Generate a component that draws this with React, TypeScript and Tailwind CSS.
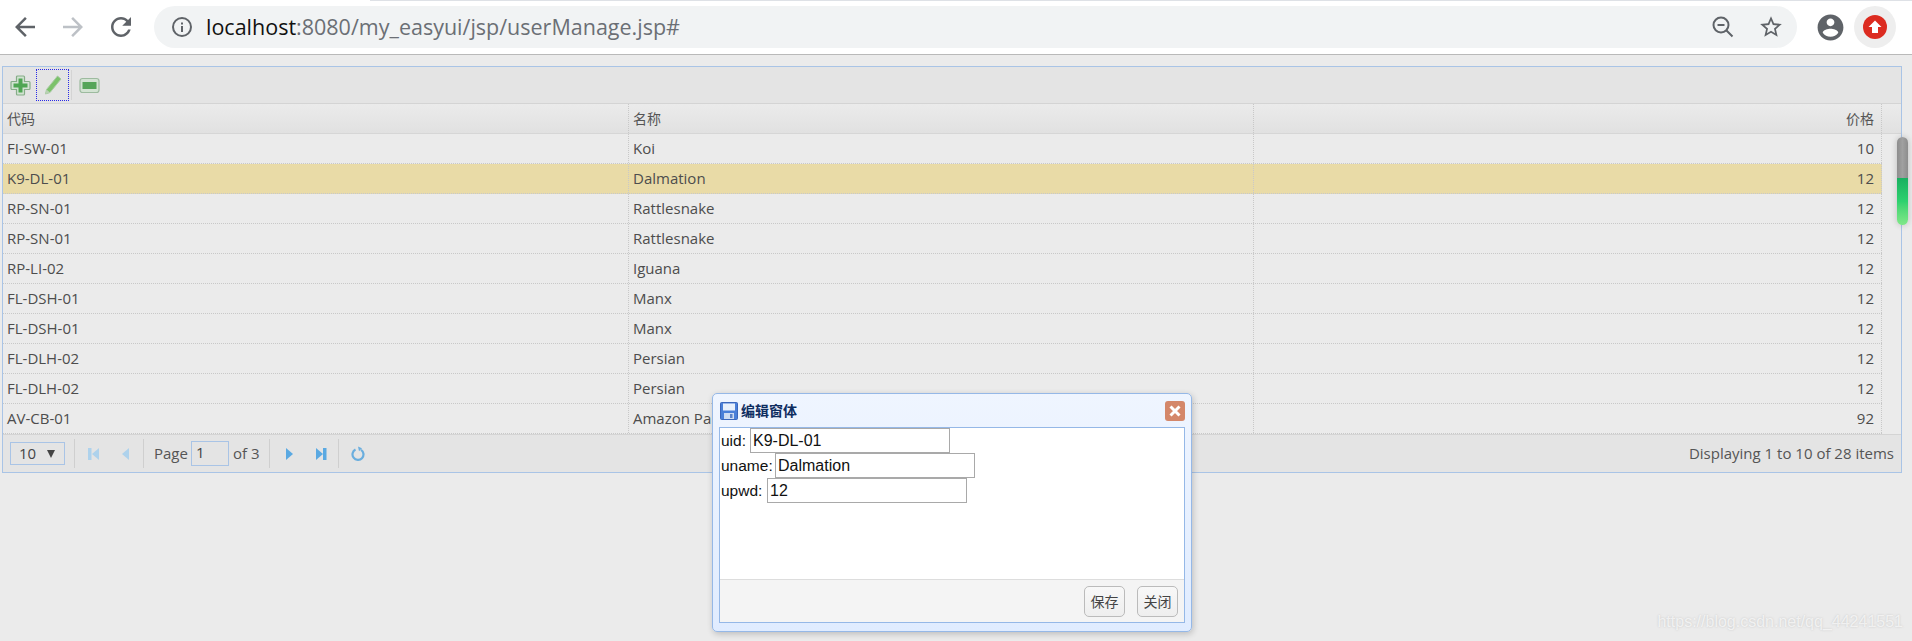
import React from 'react';

const rows = [
  ['FI-SW-01', 'Koi', '10'],
  ['K9-DL-01', 'Dalmation', '12'],
  ['RP-SN-01', 'Rattlesnake', '12'],
  ['RP-SN-01', 'Rattlesnake', '12'],
  ['RP-LI-02', 'Iguana', '12'],
  ['FL-DSH-01', 'Manx', '12'],
  ['FL-DSH-01', 'Manx', '12'],
  ['FL-DLH-02', 'Persian', '12'],
  ['FL-DLH-02', 'Persian', '12'],
  ['AV-CB-01', 'Amazon Parrot', '92'],
];

const BrowserBar = () => (
  <div className="relative flex h-[55px] items-center border-b border-[#b9b9b9] bg-white">
    {/* thin tab strip edge */}
    <div className="absolute left-[370px] right-0 top-0 h-px bg-[#dee1e6]" />
    <svg width="30" height="30" viewBox="0 0 24 24" className="ml-[10px]" fill="#5f6368">
      <path d="M20 11H7.83l5.59-5.59L12 4l-8 8 8 8 1.41-1.41L7.83 13H20v-2z" />
    </svg>
    <svg width="30" height="30" viewBox="0 0 24 24" className="ml-[18px]" fill="#bdc1c6">
      <path d="M12 4l-1.41 1.41L16.17 11H4v2h12.17l-5.58 5.59L12 20l8-8z" />
    </svg>
    <svg width="30" height="30" viewBox="0 0 24 24" className="ml-[18px]" fill="#5f6368">
      <path d="M17.65 6.35C16.2 4.9 14.21 4 12 4c-4.42 0-7.99 3.58-7.99 8s3.57 8 7.99 8c3.73 0 6.84-2.55 7.73-6h-2.08c-.82 2.33-3.04 4-5.65 4-3.31 0-6-2.69-6-6s2.69-6 6-6c1.66 0 3.14.69 4.22 1.78L13 11h7V4l-2.35 2.35z" />
    </svg>
    <div className="ml-[18px] flex h-[42px] w-[1643px] items-center rounded-full bg-[#f1f3f4] pl-[17px]">
      <svg width="22" height="22" viewBox="0 0 22 22" fill="none" stroke="#5f6368">
        <circle cx="11" cy="11" r="9" strokeWidth="2" />
        <rect x="10" y="10" width="2" height="6" fill="#5f6368" stroke="none" />
        <rect x="10" y="6.5" width="2" height="2" fill="#5f6368" stroke="none" />
      </svg>
      <div className="ml-[13px] font-['Open_Sans',sans-serif] text-[21.5px] text-[#6b6f75]">
        <span className="text-[#111]">localhost</span>:8080/my_easyui/jsp/userManage.jsp#
      </div>
      <svg width="24" height="24" viewBox="0 0 24 24" className="ml-auto" fill="none" stroke="#5f6368" strokeWidth="2">
        <circle cx="10" cy="10" r="7.5" />
        <path d="M6.5 10h7M15.5 15.5l6 6" />
      </svg>
      <svg width="26" height="26" viewBox="0 0 24 24" className="ml-[23px] mr-[13px]" fill="#5f6368">
        <path d="M22 9.24l-7.19-.62L12 2 9.19 8.63 2 9.24l5.46 4.73L5.82 21 12 17.27 18.18 21l-1.63-7.03L22 9.24zM12 15.4l-3.76 2.27 1-4.28-3.32-2.88 4.38-.38L12 6.1l1.71 4.04 4.38.38-3.32 2.88 1 4.28L12 15.4z" />
      </svg>
    </div>
    <svg width="31" height="31" viewBox="0 0 24 24" className="ml-[18px]" fill="#5f6368">
      <path d="M12 2C6.48 2 2 6.48 2 12s4.48 10 10 10 10-4.48 10-10S17.52 2 12 2zm0 3c1.66 0 3 1.34 3 3s-1.34 3-3 3-3-1.34-3-3 1.34-3 3-3zm0 14.2c-2.5 0-4.71-1.28-6-3.22.03-1.99 4-3.08 6-3.08 1.99 0 5.97 1.09 6 3.08-1.29 1.94-3.5 3.22-6 3.22z" />
    </svg>
    <div className="ml-[8px] flex h-[42px] w-[42px] items-center justify-center rounded-full bg-[#eeeeee]">
      <svg width="24" height="24" viewBox="0 0 24 24">
        <circle cx="12" cy="12" r="12" fill="#dc2b20" />
        <path d="M12 5.5l6.5 6.5H15v6H9v-6H5.5z" fill="#fff" />
      </svg>
    </div>
  </div>
);

const Toolbar = () => (
  <div className="flex h-[37px] items-center border-b border-[#d4d4d4] bg-[#e4e4e4] pl-[7px]">
    <svg width="21" height="21" viewBox="0 0 21 21">
      <path d="M7.500 1h6a1 1 0 0 1 1 1v4.500H19a1 1 0 0 1 1 1v6a1 1 0 0 1-1 1h-4.500V19a1 1 0 0 1-1 1h-6a1 1 0 0 1-1-1v-4.500H2a1 1 0 0 1-1-1v-6a1 1 0 0 1 1-1h4.500V2a1 1 0 0 1 1-1z" fill="#d3e3d3" stroke="#86ad88" strokeWidth="1.200" />
      <path d="M8.500 3.500h4v5h5v4h-5v5h-4v-5h-5v-4h5z" fill="#4fa653" />
    </svg>
    <div className="ml-[5px] flex h-[32px] w-[33px] items-center justify-center border border-dotted border-[#2a2ae8]">
      <svg width="20" height="22" viewBox="0 0 20 22">
        <path d="M14.500 2l3.500 3L7 18.500l-4.500 1.500 1-4.500z" fill="#7cc26b" stroke="#a8cba3" strokeWidth="1" />
        <path d="M3.500 15.500l3.500 3-4.500 1.500z" fill="#b9d0b3" />
      </svg>
    </div>
    <div className="ml-[2px] h-[30px] w-px bg-[#d4d4d4]" />
    <svg width="21" height="17" viewBox="0 0 21 17" className="ml-[7px]">
      <rect x="1" y="1.500" width="19" height="14" rx="2.500" fill="#d3e3d3" stroke="#9dbb9f" strokeWidth="1.200" />
      <rect x="3.500" y="5" width="14" height="7" fill="#55a559" />
    </svg>
  </div>
);

const cellLine = 'border-r border-dotted border-[#c8c8c8]';

const Grid = () => (
  <div>
    <div className="flex h-[30px] border-b border-[#d6d6d6] bg-gradient-to-b from-[#ebebeb] to-[#e1e1e1] text-[14px] text-[#555]">
      <div className={`w-[626px] pl-[4px] leading-[29px] ${cellLine}`}>代码</div>
      <div className={`w-[625px] pl-[4px] leading-[29px] ${cellLine}`}>名称</div>
      <div className={`w-[628px] pr-[7px] text-right leading-[29px] ${cellLine}`}>价格</div>
    </div>
    {rows.map((row, i) => (
      <div key={i} className="flex h-[30px]">
        <div className={`flex border-b border-dotted border-[#c8c8c8] ${i === 1 ? 'bg-[#e9dba7]' : ''}`}>
          <div className={`w-[626px] pl-[4px] leading-[29px] ${cellLine}`}>{row[0]}</div>
          <div className={`w-[625px] pl-[4px] leading-[29px] ${cellLine}`}>{row[1]}</div>
          <div className={`w-[628px] pr-[7px] text-right leading-[29px] ${cellLine}`}>{row[2]}</div>
        </div>
      </div>
    ))}
  </div>
);

const PagerSep = () => <div className="h-[29px] w-px bg-[#cfcfcf]" />;

const Pager = () => (
  <div className="flex h-[38px] items-center border-t border-[#d4d4d4] bg-[#e4e4e4] pl-[7px] pr-[7px]">
    <div className="flex h-[23px] w-[55px] items-center justify-between border border-[#a9c4e6] pl-[8px] pr-[9px] text-[#444]">
      <span>10</span>
      <span className="h-0 w-0 border-x-[4.500px] border-t-[8px] border-x-transparent border-t-[#444]" />
    </div>
    <div className="ml-[9px]"><PagerSep /></div>
    <svg width="12" height="14" viewBox="0 0 12 14" className="ml-[13px]" fill="#aed2ec">
      <rect x="0" y="1" width="3.500" height="12" />
      <path d="M11 1v12L4 7z" />
    </svg>
    <svg width="9" height="14" viewBox="0 0 9 14" className="ml-[21px]" fill="#aed2ec">
      <path d="M8 1v12L1 7z" />
    </svg>
    <div className="ml-[13px]"><PagerSep /></div>
    <span className="ml-[10px] text-[#555]">Page</span>
    <input readOnly value="1" className="ml-[3px] h-[25px] w-[38px] border border-[#a9c4e6] bg-transparent px-[4px] pb-[3px] text-[#444] outline-none" />
    <span className="ml-[4px] text-[#555]">of 3</span>
    <div className="ml-[10px]"><PagerSep /></div>
    <svg width="9" height="14" viewBox="0 0 9 14" className="ml-[15px]" fill="#5aa9e2">
      <path d="M1 1v12l7-6z" />
    </svg>
    <svg width="12" height="14" viewBox="0 0 12 14" className="ml-[21px]" fill="#5aa9e2">
      <path d="M1 1v12l7-6z" />
      <rect x="8" y="1" width="3.500" height="12" />
    </svg>
    <div className="ml-[11px]"><PagerSep /></div>
    <svg width="14" height="15" viewBox="0 0 14 15" className="ml-[12px]" fill="none" stroke="#6aaede" strokeWidth="2.200">
      <path d="M4.500 3.500A5.500 5.500 0 1 0 10 3.800" />
      <path d="M7 0.500l4 1.800-3 3z" fill="#6aaede" stroke="none" />
    </svg>
    <span className="ml-auto text-[#555]">Displaying 1 to 10 of 28 items</span>
  </div>
);

const FormRow = ({ label, value, labelWidth }: { label: string; value: string; labelWidth: string }) => (
  <div className="flex h-[25px] items-center gap-[4px] pl-[1px]">
    <label className={`${labelWidth} whitespace-nowrap text-[15.5px] text-[#111]`}>{label}</label>
    <input
      readOnly
      value={value}
      className="h-[25px] w-[200px] border border-[#a9a9a9] bg-white px-[2px] text-[16px] text-[#111] outline-none"
    />
  </div>
);

const Dialog = () => (
  <div className="absolute left-[712px] top-[393px] flex h-[239px] w-[480px] flex-col rounded-[5px] border border-[#95b8e7] bg-gradient-to-b from-[#eff5ff] to-[#e0ecff] px-[6px] pb-[8px] font-['Liberation_Sans','Noto_Sans_CJK_SC',sans-serif] shadow-[1px_2px_6px_rgba(0,0,0,0.2)]">
    <div className="flex h-[33px] items-center">
      <svg width="18" height="18" viewBox="0 0 18 18" className="ml-[1px]">
        <rect x="0.500" y="0.500" width="17" height="17" rx="1" fill="#4a7fd8" stroke="#3a66bb" />
        <rect x="3" y="1.500" width="12" height="7" fill="#e8f0fb" />
        <rect x="4" y="11" width="10" height="6" fill="#cfdcf2" />
        <rect x="10" y="12" width="2.500" height="4" fill="#5a82c8" />
      </svg>
      <span className="ml-[3px] font-['Noto_Sans_CJK_SC',sans-serif] text-[14px] font-bold text-[#0e2d5f]">编辑窗体</span>
      <div className="ml-auto flex h-[20px] w-[20px] items-center justify-center rounded-[3px] bg-[#d4876a]">
        <svg width="12" height="12" viewBox="0 0 12 12" stroke="#fff" strokeWidth="3">
          <path d="M1.500 1.500l9 9M10.500 1.500l-9 9" />
        </svg>
      </div>
    </div>
    <div className="flex flex-1 flex-col border border-[#95b8e7] bg-white">
      <div className="flex-1">
        <FormRow label="uid:" value="K9-DL-01" labelWidth="w-[25px]" />
        <FormRow label="uname:" value="Dalmation" labelWidth="w-[50px]" />
        <FormRow label="upwd:" value="12" labelWidth="w-[42px]" />
      </div>
      <div className="flex h-[43px] items-center justify-end gap-[12px] border-t border-[#dddddd] bg-[#f4f4f4] pr-[6px]">
        <button className="h-[31px] w-[41px] rounded-[5px] border border-[#bbbbbb] bg-gradient-to-b from-[#f8f8f8] to-[#eeeeee] font-['Noto_Sans_CJK_SC',sans-serif] text-[14px] text-[#444]">保存</button>
        <button className="h-[31px] w-[41px] rounded-[5px] border border-[#bbbbbb] bg-gradient-to-b from-[#f8f8f8] to-[#eeeeee] font-['Noto_Sans_CJK_SC',sans-serif] text-[14px] text-[#444]">关闭</button>
      </div>
    </div>
  </div>
);

const App: React.FC = () => {
  return (
    <div className="relative h-[641px] w-[1912px] overflow-hidden bg-[#ebebeb]">
      <BrowserBar />
      <div className="ml-[2px] mt-[11px] w-[1900px] border border-[#a9c4e6] font-['Open_Sans','Noto_Sans_CJK_SC',sans-serif] text-[15px] text-[#4d4d4d]">
        <Toolbar />
        <Grid />
        <Pager />
      </div>

      {/* overlay scrollbar extension */}
      <div className="absolute left-[1897px] top-[137px] h-[88px] w-[11px] overflow-hidden rounded-full shadow-[0_0_6px_rgba(0,0,0,0.2)]">
        <div className="h-[41px] bg-gradient-to-r from-[#8d8d8d] via-[#a0a0a0] to-[#8d8d8d]" />
        <div className="h-[47px] bg-gradient-to-b from-[#18b060] via-[#2ed16f] to-[#7fe888]" />
      </div>

      <Dialog />

      <div className="absolute right-[9px] top-[610px] font-['Liberation_Sans',sans-serif] text-[16px] text-white/70 [text-shadow:0_0_2px_rgba(170,170,170,0.6)]">
        https://blog.csdn.net/qq_44241551
      </div>
    </div>
  );
};

export default App;
